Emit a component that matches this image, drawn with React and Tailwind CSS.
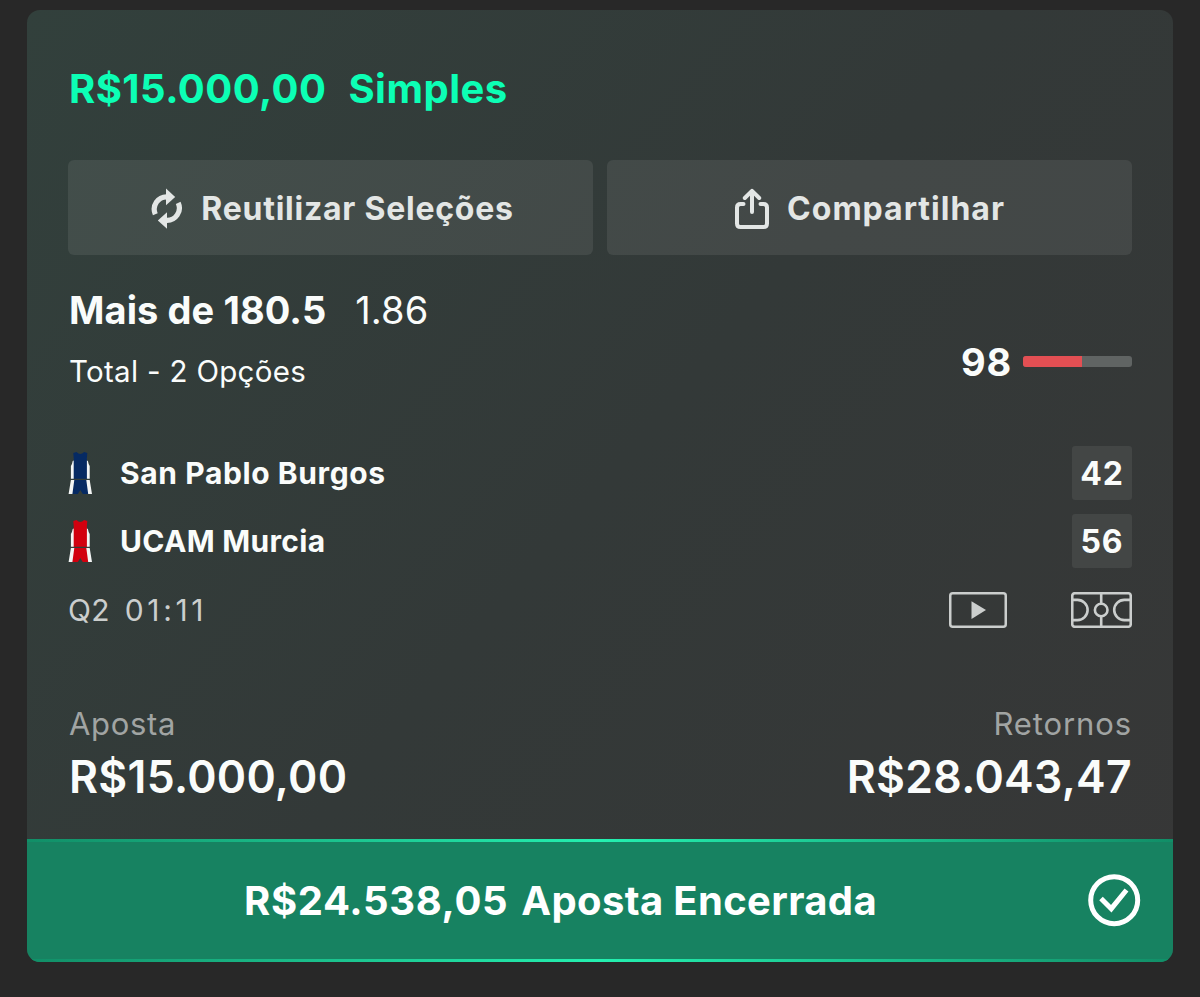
function ReuseIcon() {
  return (
    <svg className="h-[42px] w-[32px] shrink-0" viewBox="0 0 32 42" fill="none">
      <path d="M4.3 26.200A12.400 12.400 0 0 1 16 8.800" stroke="#e3e6e5" strokeWidth="5.2" />
      <path d="M15 0.600L24.200 8.900L15 17.200Z" fill="#e3e6e5" />
      <path d="M27.200 14.800A12.400 12.400 0 0 1 15.400 32.400" stroke="#e3e6e5" strokeWidth="5.2" />
      <path d="M16 24.200L6.800 32.400L16 40.800Z" fill="#e3e6e5" />
    </svg>
  );
}

function ShareIcon() {
  return (
    <svg className="h-[42px] w-[34px] shrink-0" viewBox="0 0 34 42" fill="none" stroke="#e3e6e5" strokeWidth="4" strokeLinecap="round" strokeLinejoin="round">
      <path d="M8.500 16H5.500Q2 16 2 19.500V35.500Q2 39 5.500 39H28.500Q32 39 32 35.500V19.500Q32 16 28.500 16H25.500" />
      <path d="M17 24V3.500M9.800 10L17 2.800L24.200 10" />
    </svg>
  );
}

function Jersey({ color }) {
  return (
    <svg className="h-[44px] w-[25px] shrink-0" viewBox="0 0 25 44">
      <path d="M5.300 2L8.500 1Q12.300 5 16.100 1L19.300 2L18.800 8Q19 10.500 20 12V27.800H4.600V12Q5.600 10.500 5.800 8Z" fill={color} />
      <path d="M4.700 10L5.700 9.500V27.800H2.900V15Q4.200 13 4.700 10ZM19.900 10L18.900 9.500V27.800H21.700V15Q20.400 13 19.900 10Z" fill="#f3f5f5" />
      <path d="M5.500 29H19.100L20.600 43H14.800L12.300 39L9.800 43H4Z" fill={color} />
      <path d="M2.900 29H6.300L4.400 43H0.600ZM21.700 29H18.300L20.200 43H24Z" fill="#f3f5f5" />
    </svg>
  );
}

function VideoIcon() {
  return (
    <svg className="h-[36px] w-[58px]" viewBox="0 0 58 36">
      <rect x="1.250" y="1.250" width="55.500" height="33.500" rx="2.500" fill="none" stroke="#cbcecd" strokeWidth="2.500" />
      <path d="M22.500 9.200V27L37 18.100Z" fill="#cbcecd" />
    </svg>
  );
}

function CourtIcon() {
  return (
    <svg className="h-[36px] w-[61px]" viewBox="0 0 61 36" fill="none" stroke="#cbcecd" strokeWidth="2.600">
      <rect x="1.250" y="1.250" width="58.500" height="33.500" rx="2.500" />
      <circle cx="30.200" cy="18" r="6.300" />
      <path d="M30.200 2V11.500M30.200 24.500V34" />
      <path d="M2 7.900H6.500A10.100 10.100 0 0 1 6.500 28.100H2" />
      <path d="M59 7.900H53.300A10.100 10.100 0 0 0 53.300 28.100H59" />
    </svg>
  );
}

function CheckIcon() {
  return (
    <svg className="h-[53px] w-[53px]" viewBox="0 0 53 53" fill="none" stroke="#fff">
      <circle cx="26.200" cy="26.200" r="23.500" strokeWidth="5" />
      <path d="M13 24.500L23.300 34.700L38.500 16" strokeWidth="5" />
    </svg>
  );
}

function TeamRow({ color, name, tracking, score }) {
  return (
    <div className="flex h-[54px] items-center">
      <Jersey color={color} />
      <span className={`ml-[27px] text-[30px] font-[650] ${tracking}`}>{name}</span>
      <span className="ml-auto flex h-[54px] w-[60px] items-center justify-center rounded-[3px] bg-[#434645] pt-px text-[32px] font-[650] tracking-[0.8px]">{score}</span>
    </div>
  );
}

export default function App() {
  return (
    <div className="h-[997px] w-[1200px] overflow-hidden bg-[#282828] pt-[10px] pl-[27px] font-['Inter','Liberation_Sans',sans-serif] leading-none whitespace-nowrap text-[#fafcfb]">
      <main className="flex h-[952px] w-[1146px] flex-col overflow-hidden rounded-[13px] bg-[linear-gradient(130deg,#32403c_0%,#333938_50%,#373737_100%)]">
        <div className="flex h-[829px] flex-col pr-[41px] pl-[41px]">
          <h1 className="flex h-[150px] items-center gap-[22px] pt-[7px] pl-px text-[40px] font-[650] text-[#0cffb5]">
            <span className="tracking-[0.45px]">R$15.000,00</span>
            <span className="tracking-[0.5px]">Simples</span>
          </h1>

          <div className="grid h-[95px] grid-cols-2 gap-[14px] text-[32px] font-[650] text-[#e3e6e5]">
            <button className="flex items-center justify-center gap-[18px] rounded-[6px] bg-white/8 pt-[2px] pl-[4px]">
              <ReuseIcon />
              <span className="tracking-[0.75px]">Reutilizar Seleções</span>
            </button>
            <button className="flex items-center justify-center gap-[18px] rounded-[6px] bg-white/8 pt-[2px] pl-px">
              <ShareIcon />
              <span className="tracking-[1px]">Compartilhar</span>
            </button>
          </div>

          <div className="flex h-[191px] justify-between">
            <div className="pl-px">
              <div className="mt-[30px] flex h-[50px] items-center gap-[29px] text-[38px]">
                <span className="font-bold tracking-[0.1px]">Mais de 180.5</span>
                <span className="tracking-[0.1px]">1.86</span>
              </div>
              <div className="mt-[18px] flex h-[38px] items-center text-[29.500px] tracking-[0.3px]">Total - 2 Opções</div>
            </div>
            <div className="mt-[87px] flex h-[40px] items-center gap-[11px]">
              <span className="text-[38px] font-[650] tracking-[0.8px]">98</span>
              <div className="flex h-[11px] w-[109px] -translate-y-px overflow-hidden rounded-[3px] bg-[#606463]">
                <div className="w-[59px] bg-[#e34f53]" />
              </div>
            </div>
          </div>

          <div className="flex flex-col gap-[14px]">
            <TeamRow color="#062a63" name="San Pablo Burgos" tracking="tracking-[0.6px]" score="42" />
            <TeamRow color="#d2000f" name="UCAM Murcia" tracking="tracking-[0.3px]" score="56" />
          </div>

          <div className="mt-[22px] flex h-[40px] items-center text-[30px] text-[#cbcecd]">
            <span className="tracking-[0.3px]">Q2</span>
            <span className="ml-[15px] tracking-[3.600px]">01:11</span>
            <div className="ml-auto flex gap-[64px]">
              <VideoIcon />
              <CourtIcon />
            </div>
          </div>

          <div className="mt-[73px] flex justify-between">
            <div className="pl-px">
              <div className="flex h-[40px] items-center text-[31px] tracking-[0.7px] text-[#a1a4a3]">Aposta</div>
              <div className="mt-[7px] flex h-[54px] items-center text-[44.500px] font-semibold tracking-[0.300px]">R$15.000,00</div>
            </div>
            <div className="flex flex-col items-end">
              <div className="flex h-[40px] items-center text-[31px] tracking-[0.9px] text-[#a1a4a3]">Retornos</div>
              <div className="mt-[7px] flex h-[54px] items-center text-[44.500px] font-semibold tracking-[0.300px]">R$28.043,47</div>
            </div>
          </div>
        </div>

        <div className="flex h-[123px] flex-col bg-[#178261]">
          <div className="h-[3px] bg-[linear-gradient(90deg,#118e67_0%,#24f0b0_50%,#118e67_100%)]" />
          <div className="flex flex-1 items-center pl-[217px] pr-[32px] text-[40px] font-[650] text-white">
            <span className="tracking-[0.65px]">R$24.538,05</span>
            <span className="ml-[13px] tracking-[0.35px]">Aposta Encerrada</span>
            <div className="ml-auto"><CheckIcon /></div>
          </div>
          <div className="h-[3px] bg-[linear-gradient(90deg,#118e67_0%,#24f0b0_50%,#118e67_100%)]" />
        </div>
      </main>
    </div>
  );
}
